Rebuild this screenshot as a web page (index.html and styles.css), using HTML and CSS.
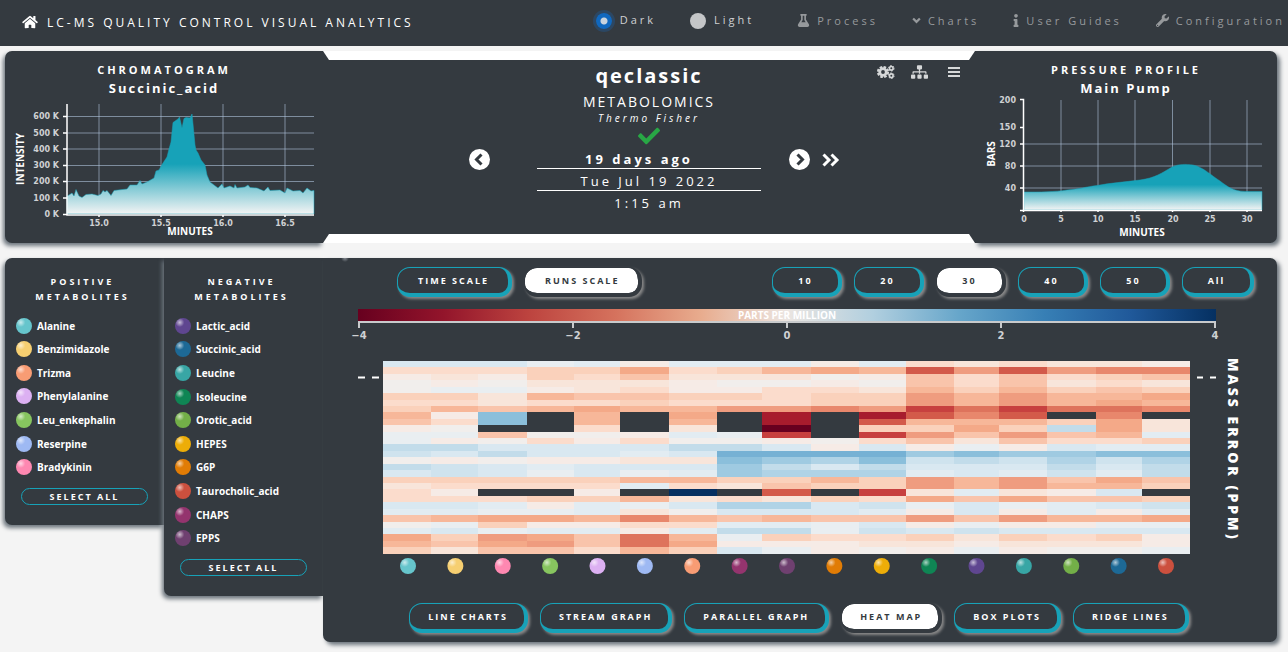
FILE: index.html
```html
<!DOCTYPE html>
<html lang="en">
<head>
<meta charset="utf-8">
<title>LC-MS Quality Control Visual Analytics</title>
<link rel="stylesheet" href="styles.css">
</head>
<body>
<header class="topbar">
  <a class="brand" href="#">
    <svg class="icon-home" viewBox="0 0 576 512"><path d="M280.37 148.26L96 300.11V464a16 16 0 0 0 16 16l112.06-.29a16 16 0 0 0 15.92-16V368a16 16 0 0 1 16-16h64a16 16 0 0 1 16 16v95.64a16 16 0 0 0 16 16.05L464 480a16 16 0 0 0 16-16V300L295.67 148.26a12.19 12.19 0 0 0-15.3 0zM571.6 251.47L488 182.56V44.05a12 12 0 0 0-12-12h-56a12 12 0 0 0-12 12v72.61L318.47 43a48 48 0 0 0-61 0L4.34 251.47a12 12 0 0 0-1.6 16.9l25.5 31A12 12 0 0 0 45.15 301l235.22-193.74a12.19 12.19 0 0 1 15.3 0L530.9 301a12 12 0 0 0 16.9-1.6l25.5-31a12 12 0 0 0-1.7-16.93z"/></svg>
    <span>LC-MS QUALITY CONTROL VISUAL ANALYTICS</span>
  </a>
  <div class="themes">
    <label class="theme"><input type="radio" name="theme" checked><span>Dark</span></label>
    <label class="theme"><input type="radio" name="theme"><span>Light</span></label>
  </div>
  <nav class="menu">
    <a href="#"><svg class="icon-menu" viewBox="0 0 448 512"><path d="M437.2 403.5L320 215V64h8c13.3 0 24-10.7 24-24V24c0-13.3-10.7-24-24-24H120c-13.3 0-24 10.7-24 24v16c0 13.3 10.7 24 24 24h8v151L10.8 403.5C-18.5 450.6 15.3 512 70.9 512h306.2c55.7 0 89.4-61.5 60.1-108.5zM137.9 320l48.2-77.6c3.7-5.2 5.8-11.6 5.8-18.4V64h64v160c0 6.9 2.2 13.2 5.8 18.4l48.2 77.6h-172z"/></svg>Process</a>
    <a href="#"><svg class="icon-caret" viewBox="0 0 8 6"><path d="M1 1.2l3 3 3-3" fill="none" stroke="currentColor" stroke-width="2"/></svg>Charts</a>
    <a href="#"><svg class="icon-info" viewBox="0 0 192 512"><path d="M20 424.229h20V279.771H20c-11.046 0-20-8.954-20-20V212c0-11.046 8.954-20 20-20h112c11.046 0 20 8.954 20 20v212.229h20c11.046 0 20 8.954 20 20V492c0 11.046-8.954 20-20 20H20c-11.046 0-20-8.954-20-20v-47.771c0-11.046 8.954-20 20-20zM96 0C56.235 0 24 32.235 24 72s32.235 72 72 72 72-32.235 72-72S135.764 0 96 0z"/></svg>User Guides</a>
    <a href="#"><svg class="icon-menu" viewBox="0 0 512 512"><path d="M507.73 109.1c-2.24-9.03-13.54-12.09-20.12-5.51l-74.36 74.36-67.88-11.31-11.31-67.88 74.36-74.36c6.62-6.62 3.43-17.9-5.66-20.16-47.38-11.74-99.55.91-136.58 37.93-39.64 39.64-50.55 97.1-34.05 147.2L18.74 402.76c-24.99 24.99-24.99 65.51 0 90.5 24.99 24.99 65.51 24.99 90.5 0l213.21-213.21c50.12 16.71 107.47 5.68 147.37-34.22 37.07-37.07 49.7-89.32 37.91-136.73zM64 472c-13.25 0-24-10.75-24-24 0-13.26 10.75-24 24-24s24 10.74 24 24c0 13.25-10.75 24-24 24z"/></svg>Configuration</a>
  </nav>
</header>

<main>
  <section class="overview">
    <article class="card card-left">
      <h2>CHROMATOGRAM</h2>
      <h3>Succinic_acid</h3>
      <svg class="chart" viewBox="5 98 318 145">
        <defs><linearGradient id="fadeA" gradientUnits="userSpaceOnUse" x1="0" y1="114" x2="0" y2="214"><stop offset=".5" stop-color="#17a2b8"/><stop offset="1" stop-color="#f4f4f4"/></linearGradient></defs>
        <path class="grid" d="M67 116.500H314M67 133H314M67 149H314M67 165.500H314M67 181.500H314M67 198H314M99 104V214M161 104V214M223 104V214M285 104V214"/>
        <path fill="url(#fadeA)" stroke="#17a2b8" stroke-width=".5" d="M67 214V196L69 195 72 193 74 196 76 189.500 79 196 82 197.500 86 194.500 92 194 98 195.500 101 194 103 190.500 105 192 107 190.500 111 195.500 114 190.500 118 190 127 189 130 185 137 185 140 180.500 142 184 147 182 154 178 156 171 159 170 162 164.500 167 157 169 149 171 142 173 122.500 178 119 179.500 117 182 128 184 118.500 186 117.500 190 118 192 114 193 124 195 145 196 150 198 153 201 160 205 165 207 175 210 182 214 185 218 188 222 184 224 188 230 186 234 188 235 184.500 237 188 245 187 248 185 250 187.500 257 188 264 191 268 187 270 190.500 280 190 285 193 287 188 293 191 300 190.500 303 193 307 188 311 191 314 190.500V214Z"/>
        <path class="axis" d="M67 104V215H314M63 116.500H67M63 133H67M63 149H67M63 165.500H67M63 181.500H67M63 198H67M63 214.500H67M99 215V217M161 215V217M223 215V217M285 215V217"/>
        <g class="tick end"><text x="59" y="119">600 K</text><text x="59" y="136">500 K</text><text x="59" y="152">400 K</text><text x="59" y="168">300 K</text><text x="59" y="184">200 K</text><text x="59" y="201">100 K</text><text x="59" y="217">0 K</text></g>
        <g class="tick mid"><text x="99" y="226">15.0</text><text x="161" y="226">15.5</text><text x="223" y="226">16.0</text><text x="285" y="226">16.5</text></g>
        <text class="axis-title" x="190" y="235">MINUTES</text>
        <text class="axis-title" transform="translate(24 159) rotate(-90)">INTENSITY</text>
      </svg>
    </article>

    <article class="instrument">
      <div class="instrument-body">
        <header class="instrument-head">
          <h1>qeclassic</h1>
          <p class="domain">METABOLOMICS</p>
          <p class="vendor">Thermo Fisher</p>
          <svg class="icon-check" viewBox="0 0 512 512"><path d="M173.898 439.404l-166.4-166.4c-9.997-9.997-9.997-26.206 0-36.204l36.203-36.204c9.997-9.998 26.207-9.998 36.204 0L192 312.69 432.095 72.596c9.997-9.997 26.207-9.997 36.204 0l36.203 36.204c9.997 9.997 9.997 26.206 0 36.204l-294.4 294.401c-9.998 9.997-26.207 9.997-36.204-.001z"/></svg>
        </header>
        <div class="tools">
          <button type="button" aria-label="Settings"><svg width="18" height="14" viewBox="0 0 18 14"><g fill="none" stroke="currentColor"><circle cx="6" cy="7" r="3.300" stroke-width="2.800"/><circle cx="6" cy="7" r="5.100" stroke-width="2" stroke-dasharray="2.600 1.400"/><circle cx="14.300" cy="3.300" r="1.800" stroke-width="1.600"/><circle cx="14.300" cy="3.300" r="2.800" stroke-width="1" stroke-dasharray="1.500 1.430"/><circle cx="14.300" cy="10.700" r="1.800" stroke-width="1.600"/><circle cx="14.300" cy="10.700" r="2.800" stroke-width="1" stroke-dasharray="1.500 1.430"/></g></svg></button>
          <button type="button" aria-label="Hierarchy"><svg width="17" height="14" viewBox="0 0 640 512"><path fill="currentColor" d="M128 352H32c-17.670 0-32 14.330-32 32v96c0 17.670 14.330 32 32 32h96c17.670 0 32-14.330 32-32v-96c0-17.670-14.330-32-32-32zm-24-80h192v48h48v-48h192v48h48v-57.590c0-21.170-17.230-38.410-38.410-38.410H344v-64h40c17.670 0 32-14.330 32-32V32c0-17.670-14.330-32-32-32H256c-17.670 0-32 14.330-32 32v96c0 17.670 14.330 32 32 32h40v64H94.410C73.230 224 56 241.230 56 262.410V320h48v-48zm264 80h-96c-17.670 0-32 14.330-32 32v96c0 17.670 14.330 32 32 32h96c17.670 0 32-14.330 32-32v-96c0-17.670-14.330-32-32-32zm240 0h-96c-17.670 0-32 14.330-32 32v96c0 17.670 14.330 32 32 32h96c17.670 0 32-14.330 32-32v-96c0-17.670-14.330-32-32-32z"/></svg></button>
          <button type="button" aria-label="Menu"><svg width="12" height="14" viewBox="0 0 12 14"><path stroke="currentColor" stroke-width="2" d="M0 3H12M0 7H12M0 11H12"/></svg></button>
        </div>
        <button class="prev" type="button" aria-label="Previous run"><svg width="21" height="21" viewBox="0 0 21 21"><circle cx="10.500" cy="10.500" r="10.500" fill="#fff"/><path class="chev" d="M12.500 5.500l-5 5 5 5"/></svg></button>
        <div class="dates">
          <p class="ago">19 days ago</p>
          <p>Tue Jul 19 2022</p>
          <p>1:15 am</p>
        </div>
        <div class="nexts">
          <button type="button" aria-label="Next run"><svg width="21" height="21" viewBox="0 0 21 21"><circle cx="10.500" cy="10.500" r="10.500" fill="#fff"/><path class="chev" d="M8.500 5.500l5 5-5 5"/></svg></button>
          <button type="button" aria-label="Latest run"><svg width="18" height="14" viewBox="0 0 18 14"><path d="M1.500 1.500L7 7l-5.500 5.500M9.500 1.500L15 7l-5.500 5.500" fill="none" stroke="#fff" stroke-width="3"/></svg></button>
        </div>
      </div>
    </article>

    <article class="card card-right">
      <h2>PRESSURE PROFILE</h2>
      <h3>Main Pump</h3>
      <svg class="chart" viewBox="975 98 302 145">
        <defs><linearGradient id="fadeB" gradientUnits="userSpaceOnUse" x1="0" y1="164" x2="0" y2="210"><stop offset=".45" stop-color="#17a2b8"/><stop offset="1" stop-color="#f4f4f4"/></linearGradient></defs>
        <path class="grid" d="M1023 144H1262M1023 166H1262M1023 188H1262M1061 100V210M1098 100V210M1135 100V210M1172.500 100V210M1210 100V210M1247 100V210"/>
        <path fill="url(#fadeB)" stroke="#17a2b8" stroke-width=".5" d="M1024 210V192C1040 192 1055 192 1067 190C1080 189 1085 187 1097 185.500C1110 183 1125 182 1140 180C1155 178 1162 173 1172 167C1178 164 1186 164 1193 165C1203 167 1212 176 1220 181C1228 187 1233 191 1245 191.500H1262V210Z"/>
        <path class="axis" d="M1020 99.500H1023.500V210.500H1262M1020 127.500H1023M1020 144H1023M1020 166H1023M1020 188H1023M1020 210.500H1023M1023.500 210V212M1061 210V212M1098 210V212M1135 210V212M1172.500 210V212M1210 210V212M1247 210V212"/>
        <g class="tick end"><text x="1016" y="103">200</text><text x="1016" y="130">150</text><text x="1016" y="147">120</text><text x="1016" y="169">80</text><text x="1016" y="191">40</text></g>
        <g class="tick mid"><text x="1024" y="222">0</text><text x="1061" y="222">5</text><text x="1098" y="222">10</text><text x="1135" y="222">15</text><text x="1173" y="222">20</text><text x="1210" y="222">25</text><text x="1247" y="222">30</text></g>
        <text class="axis-title" x="1142" y="236">MINUTES</text>
        <text class="axis-title" transform="translate(995 154) rotate(-90)">BARS</text>
      </svg>
    </article>
  </section>

  <section class="workspace">
    <aside class="panel panel-pos">
      <h4>POSITIVE METABOLITES</h4>
      <ul class="legend legend-pos" id="positive"></ul>
      <button class="select-all" type="button">SELECT ALL</button>
    </aside>
    <aside class="panel panel-neg">
      <h4>NEGATIVE METABOLITES</h4>
      <ul class="legend legend-neg" id="negative"></ul>
      <button class="select-all" type="button">SELECT ALL</button>
    </aside>
    <section class="board">
      <div class="bar">
        <div class="group">
          <button class="pill" type="button">TIME SCALE</button>
          <button class="pill active" type="button">RUNS SCALE</button>
        </div>
        <div class="group counts">
          <button class="pill" type="button">10</button>
          <button class="pill" type="button">20</button>
          <button class="pill active" type="button">30</button>
          <button class="pill" type="button">40</button>
          <button class="pill" type="button">50</button>
          <button class="pill" type="button">All</button>
        </div>
      </div>
      <svg class="chart" viewBox="323 297 954 293">
        <defs>
          <linearGradient id="scale"><stop offset="0" stop-color="#67001f"/><stop offset=".1" stop-color="#93152b"/><stop offset=".2" stop-color="#bd443f"/><stop offset=".3" stop-color="#d5725d"/><stop offset=".4" stop-color="#e8ac8e"/><stop offset=".5" stop-color="#ebe5e1"/><stop offset=".6" stop-color="#b1cfdf"/><stop offset=".7" stop-color="#67a6ca"/><stop offset=".8" stop-color="#377fb5"/><stop offset=".9" stop-color="#20599a"/><stop offset="1" stop-color="#053061"/></linearGradient>
          <radialGradient id="shine" cx=".3" cy=".28" r=".28"><stop offset="0" stop-color="#fff" stop-opacity=".65"/><stop offset="1" stop-color="#fff" stop-opacity="0"/></radialGradient>
        </defs>
        <rect x="358" y="309" width="858" height="12" fill="url(#scale)"/>
        <path class="scale-axis" d="M359 328V322H1215V328M573 322V328M787 322V328M1001 322V328"/>
        <text class="axis-title" x="787" y="319">PARTS PER MILLION</text>
        <g class="tick mid big"><text x="359" y="339">−4</text><text x="573" y="339">−2</text><text x="787" y="339">0</text><text x="1001" y="339">2</text><text x="1215" y="339">4</text></g>
        <path d="M358 377.500H365M372 377.500H379M1197 377.500H1203M1210 377.500H1216" stroke="#fff" stroke-width="2"/>
        <g id="cells" shape-rendering="crispEdges"></g>
        <g id="balls"></g>
        <text class="side-title" transform="translate(1228 358) rotate(90)">MASS ERROR (PPM)</text>
      </svg>
      <div class="group kinds">
        <button class="pill" type="button">LINE CHARTS</button>
        <button class="pill" type="button">STREAM GRAPH</button>
        <button class="pill" type="button">PARALLEL GRAPH</button>
        <button class="pill active" type="button">HEAT MAP</button>
        <button class="pill" type="button">BOX PLOTS</button>
        <button class="pill" type="button">RIDGE LINES</button>
      </div>
    </section>
  </section>
</main>
<script src="app.js"></script>
</body>
</html>
```

FILE: styles.css
```css
* { box-sizing: border-box; }
body { margin: 0; background: #f4f4f4; color: #fff; font-family: "Open Sans", "Noto Sans", sans-serif; }
h1, h2, h3, h4, p, ul { margin: 0; padding: 0; }
ul { list-style: none; }
svg { display: block; }
button { font-family: inherit; color: inherit; cursor: pointer; }
a { color: inherit; text-decoration: none; }

.topbar { display: flex; align-items: center; height: 46px; padding: 0 3px 2px 22px; background: #343a40; white-space: nowrap; }
.brand { display: flex; align-items: center; gap: 9px; font-size: 12px; letter-spacing: 3px; }
.icon-home { width: 16px; height: 14px; fill: #fff; }
.themes { display: flex; gap: 34px; margin-left: auto; padding-bottom: 6px; color: #cfd1d3; font-size: 11px; letter-spacing: 3px; }
.theme { display: flex; align-items: center; gap: 8px; height: 20px; }
.theme input { appearance: none; width: 16px; height: 16px; margin: 4px 0 0; border-radius: 50%; background: #c4c6c8; }
.theme input:checked { background: radial-gradient(circle, #c8d3de 3px, #1068bf 4px); box-shadow: 0 0 0 3px #2c4763; }
.menu { display: flex; gap: 34px; margin-left: 43px; padding-bottom: 4px; color: #96999c; font-size: 11px; letter-spacing: 3px; }
.menu a { display: flex; align-items: center; gap: 7px; }
.menu svg { fill: currentColor; }
.icon-menu { width: 13px; height: 13px; }
.icon-caret { width: 9px; height: 7px; }
.icon-info { width: 6px; height: 13px; }

main { padding: 5px 11px 10px 5px; }
.overview { display: grid; grid-template-columns: 318fr 652fr 302fr; }
.card { padding-top: 9px; background: #343a40; text-align: center; }
.card-left { border-radius: 7px 0 0 7px; box-shadow: -2px 3px 4px #6c757d; }
.card-right { border-radius: 0 7px 7px 0; box-shadow: 3px 3px 4px #6c757d; }
.card h2 { font-size: 11px; line-height: 19px; letter-spacing: 3px; }
.card h3 { font-size: 13px; line-height: 19px; letter-spacing: 2px; }
.chart { width: 100%; height: auto; overflow: visible; }

.instrument { position: relative; display: flex; flex-direction: column; background: #343a40; }
.instrument::before, .instrument::after { content: ""; height: 9px; background: #fff; clip-path: polygon(0 0, 100% 0, calc(100% - 6px) 100%, 6px 100%); }
.instrument::after { clip-path: polygon(6px 0, calc(100% - 6px) 0, 100% 100%, 0 100%); }
.instrument-body { flex: 1; display: grid; grid-template-columns: 1fr 224px 1fr; grid-template-rows: 87px 66px; text-align: center; }
.instrument-head { grid-column: 2; display: flex; flex-direction: column; align-items: center; }
h1 { font-size: 20px; line-height: 32px; letter-spacing: 2px; }
.domain { font-size: 14px; line-height: 20px; letter-spacing: 2px; }
.vendor { font-size: 10px; line-height: 12px; font-style: italic; font-weight: 500; letter-spacing: 3px; }
.icon-check { width: 22px; height: 22px; margin-top: 1px; fill: #28a745; }
.tools { display: flex; justify-content: flex-end; align-items: flex-start; gap: 16px; padding: 5px 15px 0 0; color: #d6d8d9; }
.tools button:last-child { margin-left: 4px; }
.tools button, .prev, .nexts button { padding: 0; border: 0; background: none; }
.prev { grid-column: 1; justify-self: end; align-self: start; margin-right: 47px; padding-top: 2px; }
.nexts { display: flex; align-items: center; gap: 12px; height: 25px; margin-left: 28px; }
.chev { fill: none; stroke: #343a40; stroke-width: 3; }
.dates p { height: 22px; border-bottom: 1px solid #fff; font-size: 13px; line-height: 24px; letter-spacing: 3px; }
.dates p:last-child { border: 0; }
.dates .ago { padding-right: 20px; font-weight: 700; letter-spacing: 3px; }

.workspace { display: grid; grid-template-columns: 159fr 159fr 954fr; align-items: start; margin-top: 15px; }
.panel { padding: 16px 16px 20px; background: #343a40; box-shadow: -2px 3px 4px #6c757d; text-align: center; border-radius: 7px 0 0 7px; }
.panel-neg { border-radius: 0 0 0 7px; }
.panel h4 { height: 40px; padding-right: 4px; font-size: 9px; line-height: 15px; letter-spacing: 3px; }
.legend { display: grid; grid-auto-rows: 1fr; margin: 0 -5px; text-align: left; }
.legend-pos { height: 165px; margin-bottom: 9px; }
.legend-neg { height: 236px; margin-bottom: 9px; }
.legend li { display: flex; }
.legend button { display: flex; align-items: center; gap: 5px; padding: 0; border: 0; background: none; font-size: 10px; font-weight: 700; }
.ball { width: 16px; height: 16px; border-radius: 50%; }
.select-all { display: block; width: 100%; height: 17px; padding: 0; border: 1px solid #17a2b8; border-radius: 9px; background: none; font-size: 9px; line-height: 15px; font-weight: 700; letter-spacing: 2px; }

.board { position: relative; padding: 9px 0 9px; border-radius: 0 7px 7px 7px; background: radial-gradient(circle at 22px 0, #868b92, transparent 4px) #343a40; box-shadow: 3px 3px 4px #6c757d; }
.bar { display: flex; justify-content: space-between; padding: 0 23px 0 74px; }
.group { display: flex; gap: 12px; }
.pill { height: 30px; padding: 0 19px 0 20px; border: solid #17a2b8; border-width: 1px 4px 4px 1px; border-radius: 13px; background: #343a40; box-shadow: 2px 2px 3px #8a8a8a; font-size: 9px; font-weight: 700; letter-spacing: 2px; white-space: nowrap; }
.pill.active { border-color: #343a40; background: #fff; background-clip: padding-box; color: #343a40; }
.counts .pill { width: 70px; padding: 0; }
.counts .pill:last-child { width: 72px; }
.kinds { justify-content: center; padding: 13px 2px 0 0; }
.kinds .pill { padding: 0 16px 0 18px; }

.grid { fill: none; stroke: #b0c4de; stroke-opacity: .6; }
.axis { fill: none; stroke: #fff; stroke-width: 1.500; }
.scale-axis { fill: none; stroke: #c8cacc; stroke-width: 2; }
.tick { fill: #cfd1d3; font: 700 8px "DejaVu Sans", sans-serif; }
.tick.big { font-size: 10px; }
.end { text-anchor: end; }
.mid, .axis-title { text-anchor: middle; }
.axis-title { fill: #fff; font-size: 10px; font-weight: 700; }
.side-title { fill: #fff; font-size: 14px; font-weight: 800; letter-spacing: 3px; }
```

FILE: app.js
```js
const colors = {
  Alanine: '#66c5cc', Benzimidazole: '#f6cf71', Trizma: '#f89c74', Phenylalanine: '#dcb0f2',
  Leu_enkephalin: '#87c55f', Reserpine: '#9eb9f3', Bradykinin: '#fe88b1',
  Lactic_acid: '#5f4690', Succinic_acid: '#1d6996', Leucine: '#38a6a5', Isoleucine: '#0f8554',
  Orotic_acid: '#73af48', HEPES: '#edad08', G6P: '#e17c05', Taurocholic_acid: '#cc503e',
  CHAPS: '#94346e', EPPS: '#6f4070'
};
const names = Object.keys(colors);

function fillLegend(id, list) {
  document.getElementById(id).innerHTML = list.map(n =>
    `<li><button type="button"><span class="ball" style="background:radial-gradient(circle at 30% 28%,rgba(255,255,255,.65),transparent 28%) ${colors[n]}"></span>${n}</button></li>`).join('');
}
fillLegend('positive', names.slice(0, 7));
fillLegend('negative', names.slice(7));

const order = ['Alanine', 'Benzimidazole', 'Bradykinin', 'Leu_enkephalin', 'Phenylalanine', 'Reserpine', 'Trizma',
  'CHAPS', 'EPPS', 'G6P', 'HEPES', 'Isoleucine', 'Lactic_acid', 'Leucine', 'Orotic_acid', 'Succinic_acid', 'Taurocholic_acid'];
document.getElementById('balls').innerHTML = order.map((n, i) => {
  const x = 408 + i * 47.375;
  return `<circle cx="${x}" cy="566" r="8" fill="${colors[n]}"/><circle cx="${x}" cy="566" r="8" fill="url(#shine)"/>`;
}).join('');

// Digits and capitals run towards red, lower case letters towards blue; X is a missing run.
const palette = {
  0: '#f1eeec', 1: '#f6ebe6', 2: '#f8e5da', 3: '#fbdccc', 4: '#fad1bb', 5: '#f9c4ab', 6: '#f7b799',
  7: '#f4a988', 8: '#ef9c7f', 9: '#e8876c', A: '#de735c', B: '#d35a4a', C: '#c7403f', D: '#a71c2d', E: '#67001f',
  b: '#e9eef1', c: '#e2ecf2', d: '#d9e8f1', e: '#cfe3ee', f: '#c2dcea', g: '#b0d3e6', h: '#9fcae1', i: '#8bbfdb',
  j: '#76b1d4', N: '#053061'
};
const rows = [
  'dddbc1ccc1c323221', '33344734676B8B899', '12143522201535345', '01022210010535232', '0bb12311332646454',
  '44265544344868667', '33233433344868676', '46567668898CACAA9', '61iX6X7XDXDB9BX9X', '53iX6X6XDXB666472',
  '10XX3X2XEX4474f72', 'bb5001cbCXC85856c', 'b1031300103525334', 'ffddddffd1d1b1dcc', 'edfddcdjjjjhihhii',
  '0101122ihgiefegeg', 'fedcdddhfdfdddfdf', 'dedbdbchgggcdcecf', '44444664464868575', '23333c32544868664',
  '31XX1XNXBXC2c21dX', '33344623243757554', 'ddc1cbdggdebdbcde', 'ccbbc20dddc1d1c1c', '56776965655858667',
  '0b41133ccbd1b11bb', 'cdbcc1cffbededddd', '74875A6b433424341', '65785A71112212221', '4255364db101b100b'
];
const widths = [48, 47, 49, 47, 46, 49, 48, 45, 49, 48, 47, 48, 45, 48, 49, 46, 48];
const top0 = 361, rowStep = 6.42;
let out = '';
rows.forEach((row, r) => {
  const y = Math.round(top0 + r * rowStep), h = Math.round(top0 + (r + 1) * rowStep) - y;
  let x = 383;
  widths.forEach((w, c) => {
    if (row[c] !== 'X') out += `<rect x="${x}" y="${y}" width="${w}" height="${h}" fill="${palette[row[c]]}"/>`;
    x += w;
  });
});
document.getElementById('cells').innerHTML = out;
```
